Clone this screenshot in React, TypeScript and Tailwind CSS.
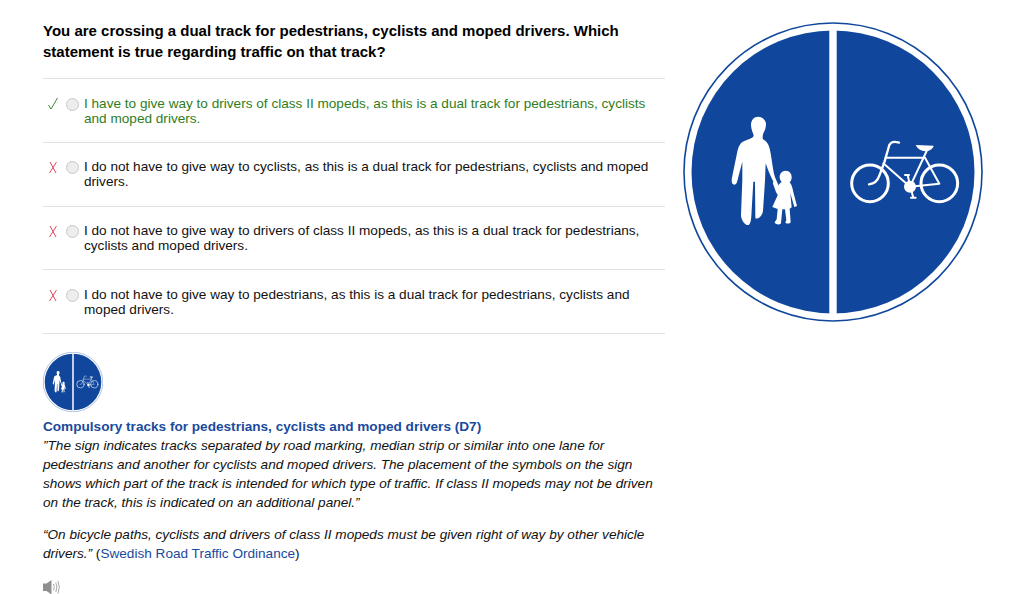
const options = [
  { ok: true, text: 'I have to give way to drivers of class II mopeds, as this is a dual track for pedestrians, cyclists and moped drivers.' },
  { ok: false, text: 'I do not have to give way to cyclists, as this is a dual track for pedestrians, cyclists and moped drivers.' },
  { ok: false, text: 'I do not have to give way to drivers of class II mopeds, as this is a dual track for pedestrians, cyclists and moped drivers.' },
  { ok: false, text: 'I do not have to give way to pedestrians, as this is a dual track for pedestrians, cyclists and moped drivers.' },
];

function Sign({ className }: { className: string }) {
  return (
    <svg viewBox="0 0 300 300" className={className}>
      <circle cx="150" cy="150" r="149" fill="#fff" stroke="#10479d" strokeWidth="1.6" />
      <circle cx="150" cy="150" r="141.5" fill="#10479d" />
      <rect x="146.3" y="6" width="7.4" height="288" fill="#fff" />
      <g transform="translate(42 88) scale(0.3333)" fill="#fff">
        <path d="M100 20 C87 20 78 30 78 45 C78 58 84 68 86 76 C86 84 74 87 58 93 C46 97 40 110 36 130 L22 198 C18 214 20 224 28 224 C35 224 37 215 39 205 L52 155 L52 210 L48 315 C48 332 62 348 71 345 C78 340 79 325 80 300 L85 215 L90 215 L91 324 C96 330 112 320 114 302 L120 212 L122 160 C128 178 136 197 145 215 L156 242 L165 236 L152 206 C144 188 141 150 136 125 C132 105 127 95 114 88 C112 84 113 76 115 70 C121 60 123 50 123 42 C123 30 112 20 100 20 Z" />
        <path d="M182 182 C171 182 164 191 164 201 C164 208 167 213 170 216 C163 220 160 226 157 234 L150 214 L143 218 L153 246 C156 252 158 252 158 256 L142 291 L158 297 L155 328 L149 337 C150 344 165 346 168 340 L172 298 L180 298 L184 330 L181 338 C186 343 196 341 197 336 L194 296 L200 292 L196 250 L208 291 L216 288 L205 246 C202 232 200 224 194 217 C198 213 200 208 200 201 C200 191 193 182 182 182 Z" />
      </g>
      <g transform="translate(162 113) scale(0.3333)" fill="none" stroke="#fff" strokeLinecap="round" strokeLinejoin="round">
        <circle cx="75" cy="145" r="55" strokeWidth="9" />
        <circle cx="283" cy="145" r="55" strokeWidth="9" />
        <path d="M162 23 C150 19 138 20 133 30 L118 82 L103 122 C98 138 88 146 72 148" strokeWidth="7" />
        <path d="M122 68 L240 68 M115 85 L195 155 L245 48 M240 68 L283 146 L195 155" strokeWidth="6" />
        <path d="M180 120 L192 120 M188 120 L196 155 L205 188 M198 188 L212 188" strokeWidth="6" />
        <circle cx="195" cy="155" r="18" fill="#fff" stroke="none" />
        <path d="M212 30 L266 32 C264 42 252 49 240 49 C228 48 218 42 212 30 Z" fill="#fff" stroke="none" />
      </g>
    </svg>
  );
}

function Mark({ ok }: { ok: boolean }) {
  return (
    <svg viewBox="0 0 12 14" className="w-[12px] h-[14px] shrink-0">
      {ok ? (
        <path d="M1.5 8 L4 12 L10.5 1" fill="none" stroke="#3f8a35" strokeWidth="1" />
      ) : (
        <path d="M3 2 L9 13 M9.5 2 L2.5 13" fill="none" stroke="#e2465c" strokeWidth="1" />
      )}
    </svg>
  );
}

function Speaker() {
  return (
    <svg viewBox="0 0 17 15" className="w-[17px] h-[15px] block">
      <path d="M0 3.5 H3.5 L8.5 0 V14.5 L3.5 11 H0 Z" fill="#8f8f8f" />
      <path d="M10.5 4 Q12 7.2 10.5 10.5 M12.8 2.5 Q15 7.2 12.8 12 M15 1 Q17.6 7.2 15 13.5" fill="none" stroke="#a8a8a8" strokeWidth="1" />
    </svg>
  );
}

export default function App() {
  return (
    <div className="h-[594px] overflow-hidden bg-white pl-[43px] flex font-['Liberation_Sans',Arial,sans-serif]">
      <div className="w-[622px] shrink-0 pt-[20px]">
        <h1 className="text-[15px] leading-[21px] font-bold text-black">
          You are crossing a dual track for pedestrians, cyclists and moped drivers. Which statement is true regarding traffic on that track?
        </h1>
        <div className="mt-[16px] border-t border-[#e2e2e2]">
          {options.map((o, i) => (
            <div key={i} className={`flex border-b border-[#e2e2e2] pt-[16.5px] pb-[16.25px] pl-[4px] ${o.ok ? 'text-[#2f7d22]' : 'text-[#111]'}`}>
              <div className="pt-[1px]"><Mark ok={o.ok} /></div>
              <span className="ml-[7px] mt-[2px] w-[13px] h-[13px] rounded-full border border-[#c8c8c8] bg-[#ededed] shrink-0" />
              <p className="ml-[5px] text-[13.6px] leading-[15px]">{o.text}</p>
            </div>
          ))}
        </div>
        <div className="mt-[18px]">
          <Sign className="w-[60px] h-[60px] block" />
        </div>
        <h2 className="mt-[5px] text-[13.6px] leading-[19px] font-bold text-[#1a4a9c]">
          Compulsory tracks for pedestrians, cyclists and moped drivers (D7)
        </h2>
        <p className="text-[13.6px] leading-[19px] italic text-[#111]">
          ”The sign indicates tracks separated by road marking, median strip or similar into one lane for pedestrians and another for cyclists and moped drivers. The placement of the symbols on the sign shows which part of the track is intended for which type of traffic. If class II mopeds may not be driven on the track, this is indicated on an additional panel.”
        </p>
        <p className="mt-[13px] text-[13.6px] leading-[19px] text-[#111]">
          <em>“On bicycle paths, cyclists and drivers of class II mopeds must be given right of way by other vehicle drivers.”</em> (<span className="text-[#1a4a9c]">Swedish Road Traffic Ordinance</span>)
        </p>
        <div className="mt-[17px]"><Speaker /></div>
      </div>
      <div className="ml-[18px] pt-[22px]">
        <Sign className="w-[300px] h-[300px] block" />
      </div>
    </div>
  );
}
